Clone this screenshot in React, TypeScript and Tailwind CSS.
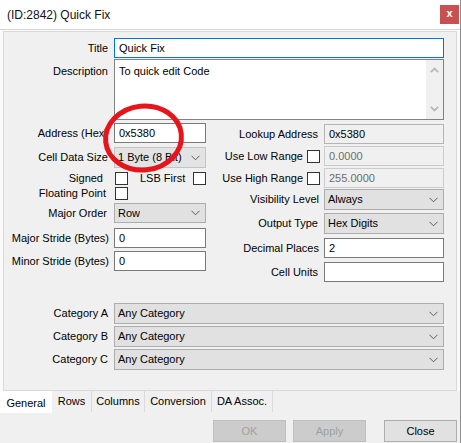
import React from "react";

function Chevron() {
  return (
    <svg width="9" height="6" viewBox="0 0 9 6" className="shrink-0">
      <path d="M0.5 0.8 L4.5 4.8 L8.5 0.8" fill="none" stroke="#5a5a5a" strokeWidth="1" />
    </svg>
  );
}

function Combo({ value, className }: { value: string; className: string }) {
  return (
    <div className={"flex items-center justify-between border pl-[3px] pr-[5px] " + className}>
      <span className="whitespace-nowrap overflow-hidden">{value}</span>
      <Chevron />
    </div>
  );
}

function Box({ value, className }: { value: string; className: string }) {
  return (
    <div className={"flex items-center border pl-[4px] whitespace-nowrap " + className}>
      {value}
    </div>
  );
}

function Check() {
  return <div className="w-[13px] h-[13px] border border-[#333333] bg-white shrink-0" />;
}

export default function App() {
  return (
    <div className="relative w-[461px] h-[443px] flex flex-col bg-[#f0f0f0] border-r border-[#8c8c8c] overflow-hidden font-['Liberation_Sans',Arial,sans-serif] text-[11px] text-black">
      {/* Title bar */}
      <div className="h-[29px] bg-white flex items-center justify-between pl-[7px] pr-px">
        <span className="text-[12px] text-[#111111]">(ID:2842) Quick Fix</span>
        <div className="w-[19px] h-[19px] bg-[#c75050] flex items-center justify-center text-white font-bold text-[11px] leading-none pb-[2px]">
          x
        </div>
      </div>
      <div className="h-px bg-[#d4d4d4]" />

      {/* Tab page */}
      <div className="h-[361px] bg-[#fafafa] pl-[3px] pr-[3px] pt-px">
        <div className="h-[360px] border border-[#d9d9d9] bg-[#f0f0f0] flex flex-col">
          {/* Title */}
          <div className="mt-[6px] flex items-center h-[20px]">
            <div className="w-[104px] text-right">Title</div>
            <div className="ml-[6px] w-[330px] h-[20px] border border-[#0078d7] bg-white flex items-center pl-[4px]">
              Quick Fix
            </div>
          </div>
          {/* Description */}
          <div className="mt-px flex items-start">
            <div className="w-[104px] text-right pt-[4px]">Description</div>
            <div className="ml-[6px] w-[330px] h-[61px] border border-[#828282] bg-white flex">
              <div className="flex-1 pl-[4px] pt-[3px]">To quick edit Code</div>
              <div className="w-[17px] bg-[#f0f0f0] flex flex-col items-center justify-between py-[7px]">
                <svg width="9" height="6" viewBox="0 0 9 6">
                  <path d="M0.8 5.2 L4.5 1.5 L8.2 5.2" fill="none" stroke="#b9b9b9" strokeWidth="1.8" />
                </svg>
                <svg width="9" height="6" viewBox="0 0 9 6">
                  <path d="M0.8 0.8 L4.5 4.5 L8.2 0.8" fill="none" stroke="#b9b9b9" strokeWidth="1.8" />
                </svg>
              </div>
            </div>
          </div>

          {/* Middle two columns */}
          <div className="mt-[3px] flex">
            {/* Left column */}
            <div className="w-[202px] flex flex-col">
              <div className="flex items-center h-[20px]">
                <div className="w-[104px] text-right whitespace-nowrap">Address (Hex)</div>
                <Box value="0x5380" className="ml-[6px] w-[92px] h-[20px] bg-white border-[#7a7a7a]" />
              </div>
              <div className="mt-[4px] flex items-center h-[21px]">
                <div className="w-[104px] text-right whitespace-nowrap">Cell Data Size</div>
                <Combo value="1 Byte (8 Bit)" className="ml-[6px] w-[92px] h-[21px] bg-[#e3e3e3] border-[#c4c4c4]" />
              </div>
              <div className="mt-[4px] flex items-center h-[13px]">
                <div className="w-[99px] text-right">Signed</div>
                <div className="ml-[12px]"><Check /></div>
                <div className="ml-[12px] w-[53px] whitespace-nowrap">LSB First</div>
                <Check />
              </div>
              <div className="mt-[2px] flex items-center h-[13px]">
                <div className="w-[102px] text-right whitespace-nowrap">Floating Point</div>
                <div className="ml-[9px]"><Check /></div>
              </div>
              <div className="mt-[3px] flex items-center h-[20px]">
                <div className="w-[103px] text-right">Major Order</div>
                <Combo value="Row" className="ml-[7px] w-[92px] h-[20px] bg-[#e1e1e1] border-[#adadad]" />
              </div>
              <div className="mt-[5px] flex items-center h-[20px]">
                <div className="w-[105px] text-right whitespace-nowrap">Major Stride (Bytes)</div>
                <Box value="0" className="ml-[5px] w-[92px] h-[20px] bg-white border-[#7a7a7a]" />
              </div>
              <div className="mt-[3px] flex items-center h-[20px]">
                <div className="w-[105px] text-right whitespace-nowrap">Minor Stride (Bytes)</div>
                <Box value="0" className="ml-[5px] w-[92px] h-[20px] bg-white border-[#7a7a7a]" />
              </div>
            </div>

            {/* Right column */}
            <div className="w-[238px] flex flex-col">
              <div className="flex items-center h-[20px] mt-px">
                <div className="w-[112px] text-right whitespace-nowrap">Lookup Address</div>
                <Box value="0x5380" className="ml-[6px] w-[120px] h-[20px] bg-[#f0f0f0] border-[#b4b4b4]" />
              </div>
              <div className="mt-[2px] flex items-center h-[20px]">
                <div className="w-[97px] text-right whitespace-nowrap">Use Low Range</div>
                <div className="ml-[4px]"><Check /></div>
                <Box value="0.0000" className="ml-[4px] w-[120px] h-[20px] bg-[#f0f0f0] border-[#cccccc] text-[#6d6d6d]" />
              </div>
              <div className="mt-[2px] flex items-center h-[20px]">
                <div className="w-[97px] text-right whitespace-nowrap">Use High Range</div>
                <div className="ml-[4px]"><Check /></div>
                <Box value="255.0000" className="ml-[4px] w-[120px] h-[20px] bg-[#f0f0f0] border-[#cccccc] text-[#6d6d6d]" />
              </div>
              <div className="mt-px flex items-center h-[21px]">
                <div className="w-[113px] text-right whitespace-nowrap">Visibility Level</div>
                <Combo value="Always" className="ml-[5px] w-[120px] h-[21px] bg-[#e1e1e1] border-[#adadad]" />
              </div>
              <div className="mt-[3px] flex items-center h-[21px]">
                <div className="w-[112px] text-right whitespace-nowrap">Output Type</div>
                <Combo value="Hex Digits" className="ml-[6px] w-[120px] h-[21px] bg-[#e1e1e1] border-[#adadad]" />
              </div>
              <div className="mt-[4px] flex items-center h-[20px]">
                <div className="w-[113px] text-right whitespace-nowrap">Decimal Places</div>
                <Box value="2" className="ml-[5px] w-[120px] h-[20px] bg-white border-[#7a7a7a]" />
              </div>
              <div className="mt-[4px] flex items-center h-[20px]">
                <div className="w-[112px] text-right whitespace-nowrap">Cell Units</div>
                <Box value="" className="ml-[6px] w-[120px] h-[20px] bg-white border-[#7a7a7a]" />
              </div>
            </div>
          </div>

          {/* Categories */}
          <div className="mt-[21px] flex items-center h-[21px]">
            <div className="w-[104px] text-right">Category A</div>
            <Combo value="Any Category" className="ml-[6px] w-[330px] h-[21px] bg-[#e1e1e1] border-[#adadad]" />
          </div>
          <div className="mt-[2px] flex items-center h-[21px]">
            <div className="w-[104px] text-right">Category B</div>
            <Combo value="Any Category" className="ml-[6px] w-[330px] h-[21px] bg-[#e1e1e1] border-[#adadad]" />
          </div>
          <div className="mt-[2px] flex items-center h-[21px]">
            <div className="w-[104px] text-right">Category C</div>
            <Combo value="Any Category" className="ml-[6px] w-[330px] h-[21px] bg-[#e1e1e1] border-[#adadad]" />
          </div>
        </div>
      </div>

      {/* Tabs */}
      <div className="h-[22px] flex items-start">
        <div className="w-[52px] h-[22px] bg-white flex items-center justify-center pt-[2px]">General</div>
        <div className="w-[40px] h-[21px] border-r border-[#dadada] flex items-center justify-center">Rows</div>
        <div className="w-[53px] h-[21px] border-r border-[#dadada] flex items-center justify-center">Columns</div>
        <div className="w-[67px] h-[21px] border-r border-[#dadada] flex items-center justify-center">Conversion</div>
        <div className="w-[61px] h-[21px] border-r border-[#dadada] flex items-center justify-center">DA Assoc.</div>
      </div>

      {/* Buttons */}
      <div className="flex pt-[7px]">
        <div className="ml-[213px] w-[73px] h-[22px] bg-[#cccccc] border border-[#bfbfbf] text-[#a0a0a0] flex items-center justify-center">OK</div>
        <div className="ml-[7px] w-[73px] h-[22px] bg-[#cccccc] border border-[#bfbfbf] text-[#a0a0a0] flex items-center justify-center">Apply</div>
        <div className="ml-[18px] w-[73px] h-[22px] bg-[#e1e1e1] border border-[#adadad] flex items-center justify-center">Close</div>
      </div>

      {/* Red annotation circle */}
      <svg className="absolute left-[100px] top-[100px] pointer-events-none" width="90" height="80" viewBox="0 0 90 80">
        <ellipse cx="43.5" cy="38" rx="38" ry="32" fill="none" stroke="#e8141c" strokeWidth="5" transform="rotate(-6 43.5 38)" />
      </svg>
    </div>
  );
}
